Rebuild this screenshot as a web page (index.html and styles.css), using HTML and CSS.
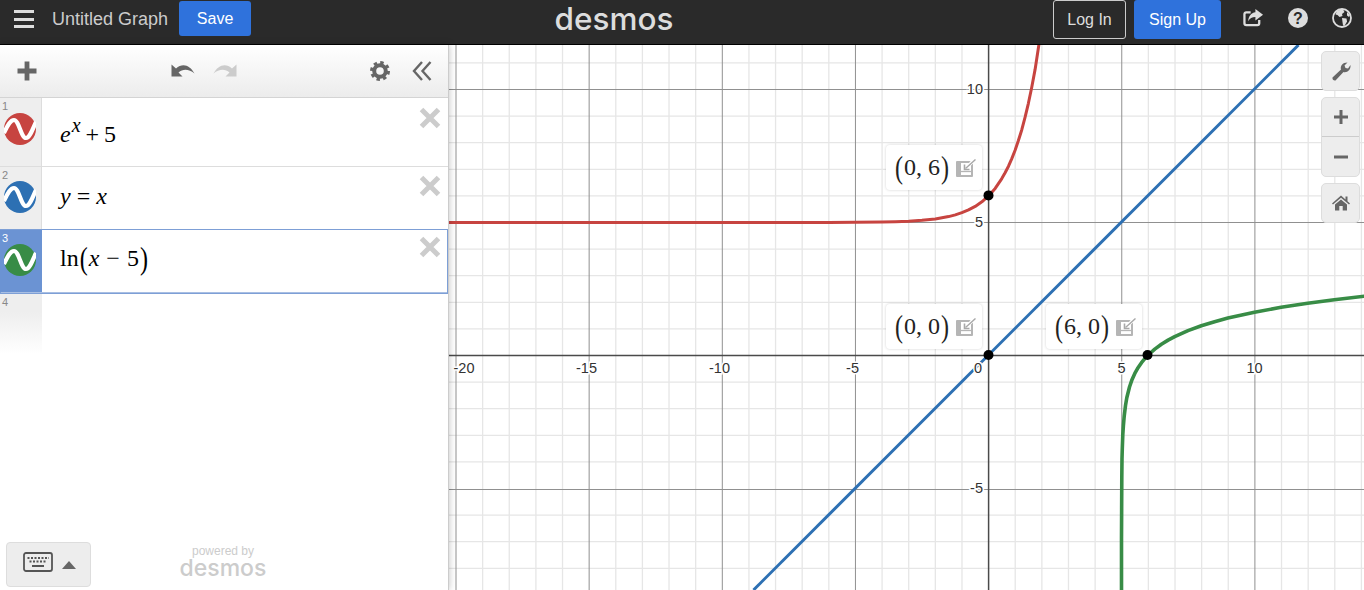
FILE: index.html
```html
<!DOCTYPE html>
<html lang="en">
<head>
    <meta charset="UTF-8">
    <meta name="viewport" content="width=device-width, initial-scale=1.0">
    <title>Desmos | Graphing Calculator</title>
    <link rel="stylesheet" href="styles.css">
</head>
<body>
    <svg class="defs" width="0" height="0">
        <symbol id="wave" viewBox="0 0 32 32">
            <circle cx="16" cy="16" r="16" fill="currentColor"/>
            <path d="M0 20C3 14 6 7 10 7C15 7 17 25 22 25C26 25 29 15 32 9" fill="none" stroke="#fff" stroke-width="4.200"/>
        </symbol>
        <symbol id="cross" viewBox="0 0 22 22">
            <path d="M2.500 2.500L19.500 19.500M19.500 2.500L2.500 19.500" stroke="#ccc" stroke-width="5" fill="none"/>
        </symbol>
        <symbol id="note" viewBox="0 0 20 18">
            <rect x="0" y="2" width="17" height="16" rx="1" fill="#b5b5b5"/>
            <path d="M5 4H15V16H5Z" fill="#fff"/>
            <path d="M5 12.500H15" stroke="#b5b5b5" stroke-width="1.300"/>
            <path d="M20 0L12 7.500L15 3.500Z" fill="#fff" stroke="#fff" stroke-width="2.500"/>
            <path d="M19.500 0.500L9.500 9.500" stroke="#a8a8a8" stroke-width="1.400" fill="none"/>
            <path d="M8.500 5.500V10.500H13.500" stroke="#a8a8a8" stroke-width="1.600" fill="none"/>
        </symbol>
    </svg>

    <header class="topbar">
        <div class="topbar-left">
            <button class="menu-btn" aria-label="Menu"><span></span><span></span><span></span></button>
            <span class="graph-title">Untitled Graph</span>
            <button class="btn btn-blue btn-save">Save</button>
        </div>
        <div class="logo">desmos</div>
        <div class="topbar-right">
            <button class="btn btn-outline">Log In</button>
            <button class="btn btn-blue btn-signup">Sign Up</button>
            <svg class="top-icon top-share" width="21" height="20" viewBox="0 0 22 20">
                <path d="M8 4H3.500Q1.500 4 1.500 6V15.500Q1.500 17.500 3.500 17.500H15Q17 17.500 17 15.500V12" fill="none" stroke="#ddd" stroke-width="2.400"/>
                <path d="M13 0.500L21 6.500L13 12.500V9C9.500 9 7 10 5.500 13.500C5.500 8.500 8.500 4.500 13 4Z" fill="#ddd"/>
            </svg>
            <svg class="top-icon" width="20" height="20" viewBox="0 0 20 20">
                <circle cx="10" cy="10" r="10" fill="#ddd"/>
                <text x="10" y="15.500" text-anchor="middle" class="help-mark">?</text>
            </svg>
            <svg class="top-icon" width="20" height="20" viewBox="0 0 20 20">
                <circle cx="10" cy="10" r="9" fill="none" stroke="#ddd" stroke-width="1.800"/>
                <path d="M5 2.500L11 1.500L12.500 4L10 6L10.500 8L7.500 9L5.500 7L3.500 6.500Z" fill="#ddd"/>
                <path d="M10 10L14.500 10.500L15 13.500L12.500 18L11 17.500L10.500 14Z" fill="#ddd"/>
                <path d="M15 4L18 7L17 9L15 7.500Z" fill="#ddd"/>
            </svg>
        </div>
    </header>

    <main class="workspace">
        <aside class="panel">
            <div class="toolbar">
                <svg width="20" height="20" viewBox="0 0 20 20"><path d="M10 0.500V19.500M0.500 10H19.500" stroke="#666" stroke-width="4.800"/></svg>
                <div class="undo-redo">
                    <svg width="24" height="16" viewBox="0 0 24 16"><path d="M0.500 3.500V15.500H11.500L7.500 11.500C12 7.500 18 8 23.500 12.500C19 4 11.500 1.500 5 7.500Z" fill="#666"/></svg>
                    <svg width="24" height="16" viewBox="0 0 24 16"><path d="M23.500 3.500V15.500H12.500L16.500 11.500C12 7.500 6 8 0.500 12.500C5 4 12.500 1.500 19 7.500Z" fill="#ccc"/></svg>
                </div>
                <div class="toolbar-right">
                    <svg width="20" height="20" viewBox="0 0 20 20">
                        <circle cx="10" cy="10" r="5.800" fill="none" stroke="#666" stroke-width="4"/>
                        <circle cx="10" cy="10" r="8.500" fill="none" stroke="#666" stroke-width="3" stroke-dasharray="3.400 3.270"/>
                    </svg>
                    <svg width="20" height="20" viewBox="0 0 20 20"><path d="M10 1L2 10L10 19M18.500 1L10.500 10L18.500 19" fill="none" stroke="#666" stroke-width="2.400"/></svg>
                </div>
            </div>

            <div class="expr expr-first">
                <div class="gutter"><span class="num">1</span><svg class="wave wave-red"><use href="#wave"/></svg></div>
                <div class="math"><i>e</i><sup>x</sup><span class="op">+</span>5</div>
                <svg class="del"><use href="#cross"/></svg>
            </div>
            <div class="expr expr-second">
                <div class="gutter"><span class="num">2</span><svg class="wave wave-blue"><use href="#wave"/></svg></div>
                <div class="math"><i>y</i><span class="op">=</span><i>x</i></div>
                <svg class="del"><use href="#cross"/></svg>
            </div>
            <div class="expr expr-selected">
                <div class="gutter"><span class="num">3</span><svg class="wave wave-green"><use href="#wave"/></svg></div>
                <div class="math">ln<span class="paren">(</span><i>x</i><span class="op">−</span>5<span class="paren">)</span></div>
                <svg class="del"><use href="#cross"/></svg>
            </div>
            <div class="expr expr-empty">
                <div class="gutter"><span class="num">4</span></div>
            </div>

            <div class="panel-foot">
                <button class="keys-btn" aria-label="Keyboard">
                    <svg width="30" height="20" viewBox="0 0 30 20">
                        <rect x="1" y="1" width="28" height="18" rx="2" fill="none" stroke="#555" stroke-width="1.800"/>
                        <path d="M4.500 6H26" stroke="#555" stroke-width="2" stroke-dasharray="2 1.500"/>
                        <path d="M6.500 9.500H24" stroke="#555" stroke-width="2" stroke-dasharray="2 1.500"/>
                        <path d="M9 14H21" stroke="#555" stroke-width="2"/>
                    </svg>
                    <span class="keys-arrow"></span>
                </button>
                <div class="powered">
                    <span>powered by</span>
                    <span class="powered-logo">desmos</span>
                </div>
            </div>
        </aside>

        <section class="graph">
            <svg class="plot" width="915" height="545" viewBox="449 45 915 545">
                <path class="grid-minor" d="M482.630 45V590M509.260 45V590M535.890 45V590M562.520 45V590M615.780 45V590M642.410 45V590M669.040 45V590M695.670 45V590M748.930 45V590M775.560 45V590M802.190 45V590M828.820 45V590M882.080 45V590M908.710 45V590M935.340 45V590M961.970 45V590M1015.230 45V590M1041.860 45V590M1068.490 45V590M1095.120 45V590M1148.380 45V590M1175.010 45V590M1201.640 45V590M1228.270 45V590M1281.530 45V590M1308.160 45V590M1334.790 45V590M1361.420 45V590"/>
                <path class="grid-minor" d="M449 62.900H1364M449 116.100H1364M449 142.700H1364M449 169.300H1364M449 195.900H1364M449 249.100H1364M449 275.700H1364M449 302.300H1364M449 328.900H1364M449 382.100H1364M449 408.700H1364M449 435.300H1364M449 461.900H1364M449 515.100H1364M449 541.700H1364M449 568.300H1364"/>
                <path class="grid-major" d="M456 45V590M589.150 45V590M722.300 45V590M855.450 45V590M1121.750 45V590M1254.900 45V590M449 89.500H1364M449 222.500H1364M449 489.500H1364"/>
                <path class="axis" d="M988.600 45V590M449 355.500H1364"/>

                <path class="curve curve-blue" d="M753.500 590L1298.500 45"/>
                <path class="curve curve-red" d="M449 222.500H780L828.900 222.400L855.500 222.300L882.100 222L895.400 221.700L908.700 221.200L922 220.300L935.300 218.900L948.600 216.600L955.300 214.900L961.900 212.700L968.500 209.900L975.200 206.400L981.900 201.800L988.500 195.900L995.200 188.400L1001.800 178.600L1005.100 172.700L1008.500 166.200L1011.800 158.600L1015.100 150.200L1018.400 140.500L1021.800 129.700L1025.100 117.200L1028.400 103.300L1031.700 87.500L1035.100 69.400L1039 44"/>
                <path class="curve curve-green" d="M1121.500 590V538.700L1121.800 477.500L1122 459L1122.300 448.300L1122.800 434.700L1123.400 425.700L1124.200 416.200L1125.500 405.500L1126.800 397.800L1129.500 387L1132.100 379.400L1134.800 373.400L1137.500 368.600L1141.500 362.700L1144.800 358.600L1148.100 355L1154.800 349.100L1161.400 344.200L1168.100 340.100L1174.700 336.600L1188 330.600L1201.300 325.800L1214.600 321.700L1227.900 318.100L1254.500 312.200L1281.100 307.300L1307.700 303.200L1334.300 299.700L1364.400 296.200"/>

                <text class="tick" x="464" y="373" text-anchor="middle">-20</text>
                <text class="tick" x="586.500" y="373" text-anchor="middle">-15</text>
                <text class="tick" x="719.500" y="373" text-anchor="middle">-10</text>
                <text class="tick" x="852.500" y="373" text-anchor="middle">-5</text>
                <text class="tick" x="978" y="373" text-anchor="middle">0</text>
                <text class="tick" x="1121.500" y="373" text-anchor="middle">5</text>
                <text class="tick" x="1254.500" y="373" text-anchor="middle">10</text>
                <text class="tick" x="983" y="94" text-anchor="end">10</text>
                <text class="tick" x="983" y="227" text-anchor="end">5</text>
                <text class="tick" x="983" y="493" text-anchor="end">-5</text>

                <circle cx="988.500" cy="195.400" r="5"/>
                <circle cx="988.500" cy="355" r="5"/>
                <circle cx="1147.500" cy="355" r="5"/>
            </svg>

            <div class="point-label label-top"><span class="coord"><span class="paren">(</span>0, 6<span class="paren">)</span></span><svg class="note"><use href="#note"/></svg></div>
            <div class="point-label label-origin"><span class="coord"><span class="paren">(</span>0, 0<span class="paren">)</span></span><svg class="note"><use href="#note"/></svg></div>
            <div class="point-label label-right"><span class="coord"><span class="paren">(</span>6, 0<span class="paren">)</span></span><svg class="note"><use href="#note"/></svg></div>

            <div class="graph-tools">
                <div class="tool-group">
                    <button class="tool" aria-label="Graph settings">
                        <svg width="20" height="20" viewBox="0 0 20 20"><path d="M1.500 16.500L10 8.500C9 5 11.500 1.500 16.500 1.500L13.500 4.500L14.500 7L17 7.500L19.500 4C20 9 16 12 12.500 11L4.500 19.500C3 20 1 18.500 1.500 16.500Z" fill="#666"/></svg>
                    </button>
                </div>
                <div class="tool-group">
                    <button class="tool tool-split" aria-label="Zoom in">
                        <svg width="14" height="14" viewBox="0 0 14 14"><path d="M7 0V14M0 7H14" stroke="#666" stroke-width="3"/></svg>
                    </button>
                    <button class="tool tool-out" aria-label="Zoom out">
                        <svg width="14" height="14" viewBox="0 0 14 14"><path d="M0 7H14" stroke="#666" stroke-width="3"/></svg>
                    </button>
                </div>
                <div class="tool-group">
                    <button class="tool" aria-label="Default viewport">
                        <svg width="18" height="16" viewBox="0 0 18 16"><path d="M9 0.500L13.500 4.500V1.500H15.500V6.300L18 8.500L17 9.500L9 2.800L1 9.500L0 8.500Z" fill="#666"/><path d="M3 9.500L9 4.500L15 9.500V15.500H10.700V11H7.300V15.500H3Z" fill="#666"/></svg>
                    </button>
                </div>
            </div>
        </section>
    </main>
</body>
</html>
```

FILE: styles.css
```css
html, body {
    margin: 0;
    padding: 0;
    height: 100%;
    overflow: hidden;
}
body {
    font-family: "Liberation Sans", Arial, sans-serif;
    background: #fff;
    display: flex;
    flex-direction: column;
}
button {
    font-family: inherit;
    cursor: pointer;
}
.defs {
    position: absolute;
}

/* top bar */
.topbar {
    height: 44px;
    flex: none;
    background: #2a2a2a;
    border-bottom: 1px solid #000;
    display: flex;
    justify-content: space-between;
    position: relative;
}
.topbar-left {
    display: flex;
    align-items: flex-start;
    padding-left: 14px;
}
.menu-btn {
    width: 20px;
    height: 18px;
    margin-top: 10px;
    padding: 0;
    border: none;
    background: none;
    display: flex;
    flex-direction: column;
    justify-content: space-between;
}
.menu-btn span {
    display: block;
    height: 3px;
    width: 100%;
    background: #ddd;
}
.graph-title {
    color: #ccc;
    font-size: 18px;
    line-height: 38px;
    margin-left: 18px;
    margin-right: 11px;
}
.btn {
    font-size: 16px;
    border-radius: 3px;
    padding: 0;
}
.btn-blue {
    background: #2f72dc;
    color: #fff;
    border: none;
}
.btn-save {
    width: 72px;
    height: 35px;
    margin-top: 1px;
}
.btn-outline {
    width: 73px;
    height: 39px;
    background: none;
    color: #ddd;
    border: 1px solid #ccc;
}
.btn-signup {
    width: 87px;
    height: 39px;
    margin-left: 8px;
}
.logo {
    position: absolute;
    left: 553px;
    top: 0;
    width: 122px;
    text-align: center;
    color: #ddd;
    font-family: Inter, sans-serif;
    font-size: 31.500px;
    font-weight: 500;
    line-height: 38px;
}
.topbar-right {
    display: flex;
    align-items: flex-start;
    padding-right: 12px;
}
.top-icon {
    margin-top: 8px;
    margin-left: 24px;
}
.topbar-right .top-share {
    margin-left: 22px;
}
.help-mark {
    font-family: "Liberation Sans", Arial, sans-serif;
    font-size: 16px;
    font-weight: bold;
    fill: #2a2a2a;
}

/* expression list */
.workspace {
    flex: 1;
    display: flex;
    min-height: 0;
}
.panel {
    width: 448px;
    flex: none;
    border-right: 1px solid #ccc;
    box-shadow: 0 0 7px rgba(0, 0, 0, 0.25);
    background: #fff;
    position: relative;
    z-index: 2;
    display: flex;
    flex-direction: column;
}
.toolbar {
    height: 53px;
    flex: none;
    box-sizing: border-box;
    background: linear-gradient(#fff, #ececec);
    border-bottom: 1px solid #d4d4d4;
    display: flex;
    align-items: center;
    justify-content: space-between;
    padding: 0 16px 1px 17px;
    position: relative;
}
.undo-redo {
    position: absolute;
    left: 171px;
    top: 16px;
    display: flex;
    gap: 18px;
}
.toolbar-right {
    display: flex;
    gap: 22px;
}
.expr {
    display: flex;
    position: relative;
    border-bottom: 1px solid #ddd;
}
.expr-first {
    height: 68px;
}
.expr-second {
    height: 62px;
}
.expr-selected {
    height: 62px;
    outline: 1px solid #7d9fd6;
    outline-offset: -1px;
    border-top: 1px solid #7d9fd6;
    border-bottom: 2px solid #a9bfe3;
    margin-top: -1px;
}
.expr-empty {
    height: 60px;
    border-bottom: none;
}
.gutter {
    width: 41px;
    flex: none;
    background: #eee;
    border-right: 1px solid #ddd;
    position: relative;
    display: flex;
    align-items: center;
    justify-content: center;
}
.expr-first .gutter {
    align-items: flex-start;
}
.expr-first .wave {
    margin-top: 15px;
}
.expr-second .wave,
.expr-selected .wave {
    margin-bottom: 2px;
}
.expr-selected .gutter {
    background: #6b93d3;
    border-right-color: #6b93d3;
}
.expr-empty .gutter {
    background: linear-gradient(#eee 30%, #fff);
    border-right: 1px solid transparent;
}
.num {
    position: absolute;
    left: 2px;
    top: 2px;
    font-size: 11px;
    line-height: 13px;
    color: #888;
}
.expr-selected .num {
    color: #fff;
}
.wave {
    width: 32px;
    height: 32px;
    margin-right: 1px;
}
.wave-red {
    color: #c74440;
}
.wave-blue {
    color: #2d70b3;
}
.wave-green {
    color: #388c46;
}
.math {
    font-family: "Liberation Serif", "Times New Roman", serif;
    font-size: 24px;
    color: #000;
    padding-left: 18px;
    display: flex;
    align-items: baseline;
    line-height: 30px;
    padding-top: 14px;
}
.expr-first .math {
    padding-top: 21px;
}
.expr-selected .math {
    padding-top: 13px;
}
.math sup {
    font-size: 20px;
    font-style: italic;
    line-height: 0;
    position: relative;
    top: -10px;
    margin-left: 1px;
    vertical-align: baseline;
}
.op {
    margin: 0 6px;
}
.expr-first .op {
    margin: 0 5px;
}
.expr-selected .op {
    margin: 0 7px;
}
.paren {
    display: inline-block;
    transform: scaleY(1.35);
    font-weight: 200;
    margin: 0 1px;
}
.del {
    position: absolute;
    right: 7px;
    top: 9px;
    width: 22px;
    height: 22px;
}
.expr-second .del {
    top: 8px;
}
.expr-selected .del {
    top: 6px;
}

.panel-foot {
    margin-top: auto;
    display: flex;
    align-items: flex-end;
    padding: 0 0 3px 6px;
}
.keys-btn {
    width: 85px;
    height: 45px;
    background: #ededed;
    border: 1px solid #ddd;
    border-radius: 4px;
    display: flex;
    align-items: flex-start;
    padding: 9px 0 0 16px;
    gap: 9px;
}
.keys-arrow {
    width: 0;
    height: 0;
    margin-top: 9px;
    border-left: 7px solid transparent;
    border-right: 7px solid transparent;
    border-bottom: 8px solid #666;
}
.powered {
    width: 90px;
    margin-left: 87px;
    display: flex;
    flex-direction: column;
    align-items: center;
    color: #ccc;
    font-size: 12px;
    line-height: 14px;
    padding-bottom: 8px;
}
.powered-logo {
    font-family: Inter, sans-serif;
    font-size: 23px;
    font-weight: 500;
    line-height: 21px;
}

/* graph paper */
.graph {
    flex: 1;
    position: relative;
    overflow: hidden;
    background: #fff;
}
.plot {
    position: absolute;
    right: 0;
    top: 0;
}
.grid-minor {
    stroke: #e6e6e6;
    stroke-width: 1.300;
    fill: none;
}
.grid-major {
    stroke: #909090;
    stroke-width: 1;
    fill: none;
}
.axis {
    stroke: #4a4a4a;
    stroke-width: 1.500;
    fill: none;
}
.curve {
    fill: none;
    stroke-width: 3;
    stroke-linejoin: round;
}
.curve-red {
    stroke: #c74440;
}
.curve-blue {
    stroke: #2d70b3;
}
.curve-green {
    stroke: #388c46;
    stroke-width: 3.600;
}
.tick {
    font-size: 14.500px;
    fill: #333;
    stroke: #fff;
    stroke-width: 3px;
    paint-order: stroke;
}
.point-label {
    position: absolute;
    width: 96px;
    height: 45px;
    box-sizing: border-box;
    background: #fff;
    border-radius: 4px;
    box-shadow: 0 0 3px rgba(0, 0, 0, 0.18);
    display: flex;
    align-items: center;
    justify-content: space-between;
    padding: 0 6px 0 8px;
}
.label-top {
    left: 437px;
    top: 100px;
}
.label-origin {
    left: 437px;
    top: 259px;
}
.label-right {
    left: 597px;
    top: 259px;
}
.coord {
    font-family: "Liberation Serif", "Times New Roman", serif;
    font-size: 24px;
    color: #222;
    white-space: nowrap;
}
.note {
    width: 20px;
    height: 18px;
}

.graph-tools {
    position: absolute;
    top: 6px;
    right: 4px;
    display: flex;
    flex-direction: column;
    gap: 6px;
}
.tool-group {
    width: 39px;
    box-sizing: border-box;
    background: #ededed;
    border: 1px solid #ddd;
    border-radius: 5px;
    display: flex;
    flex-direction: column;
}
.tool {
    height: 38px;
    padding: 0;
    background: none;
    border: none;
    display: flex;
    align-items: center;
    justify-content: center;
}
.tool-split {
    height: 39px;
    border-bottom: 1px solid #ccc;
}
.tool-out {
    height: 39px;
}
```
